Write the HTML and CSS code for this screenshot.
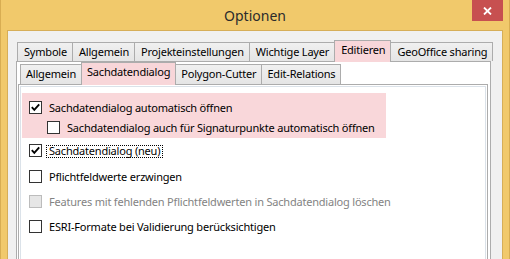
FILE: index.html
```html
<!DOCTYPE html>
<html lang="de">
<head>
  <meta charset="UTF-8">
  <title>Optionen</title>
  <link rel="stylesheet" href="styles.css">
</head>
<body>
  <div class="window">
    <div class="titlebar">
      <span class="title">Optionen</span>
      <button class="close-btn" aria-label="Schließen">
        <svg width="9" height="8" viewBox="0 0 9 8"><path d="M1 0.5 L8 7.5 M8 0.5 L1 7.5" stroke="#fff" stroke-width="1.8"/></svg>
      </button>
    </div>

    <div class="client">
      <div class="tab-control outer">
        <div class="tab-strip">
          <div class="tab">Symbole</div>
          <div class="tab">Allgemein</div>
          <div class="tab">Projekteinstellungen</div>
          <div class="tab">Wichtige Layer</div>
          <div class="tab active">Editieren</div>
          <div class="tab">GeoOffice sharing</div>
        </div>
        <div class="tab-panel">

          <div class="tab-control inner">
            <div class="tab-strip">
              <div class="tab">Allgemein</div>
              <div class="tab active">Sachdatendialog</div>
              <div class="tab">Polygon-Cutter</div>
              <div class="tab">Edit-Relations</div>
            </div>
            <div class="tab-panel">
              <div class="page">

                <!-- highlighted group -->
                <div class="highlight">
                  <label class="check-row">
                    <span class="check checked"><svg width="11" height="11" viewBox="0 0 11 11"><polyline points="1.8,5.2 4.3,7.8 9.2,2.4" fill="none" stroke="#000" stroke-width="1.9"/></svg></span>
                    <span class="check-label">Sachdatendialog automatisch öffnen</span>
                  </label>
                  <label class="check-row sub">
                    <span class="check"></span>
                    <span class="check-label">Sachdatendialog auch für Signaturpunkte automatisch öffnen</span>
                  </label>
                </div>

                <div class="check-list">
                  <label class="check-row focused">
                    <span class="check checked"><svg width="11" height="11" viewBox="0 0 11 11"><polyline points="1.8,5.2 4.3,7.8 9.2,2.4" fill="none" stroke="#000" stroke-width="1.9"/></svg></span>
                    <span class="check-label">Sachdatendialog (neu)</span>
                  </label>
                  <label class="check-row">
                    <span class="check"></span>
                    <span class="check-label">Pflichtfeldwerte erzwingen</span>
                  </label>
                  <label class="check-row disabled">
                    <span class="check"></span>
                    <span class="check-label">Features mit fehlenden Pflichtfeldwerten in Sachdatendialog löschen</span>
                  </label>
                  <label class="check-row">
                    <span class="check"></span>
                    <span class="check-label">ESRI-Formate bei Validierung berücksichtigen</span>
                  </label>
                </div>

              </div>
            </div>
          </div>

        </div>
      </div>
    </div>
  </div>
</body>
</html>
```

FILE: styles.css
```css
/* Reset */
* {
  margin: 0;
  padding: 0;
  box-sizing: border-box;
}

body {
  width: 510px;
  height: 259px;
  overflow: hidden;
  font-family: "Noto Sans", "Open Sans", sans-serif;
  font-size: 11px;
  letter-spacing: -0.2px;
  color: #000;
  background: #f1c96b;
}

/* Window frame */
.window {
  height: 259px;
  display: flex;
  flex-direction: column;
  background: #f1c96b;
  border-left: 1px solid #d8ad52;
  border-right: 1px solid #d8ad52;
  padding: 0 6px;
}

.titlebar {
  height: 30px;
  flex-shrink: 0;
  display: grid;
  grid-template-columns: 1fr auto 1fr;
  align-items: start;
}
.title {
  grid-column: 2;
  font-size: 14px;
  letter-spacing: 0;
  line-height: 31px;
  color: #2b2b2b;
}
.close-btn {
  grid-column: 3;
  justify-self: end;
  width: 31px;
  height: 21px;
  border: none;
  background: #c75050;
  display: flex;
  justify-content: center;
  align-items: center;
}

/* Client area */
.client {
  flex: 1;
  background: #f0f0f0;
  border: 1px solid #d6ae58;
  border-bottom: none;
  padding: 9px 0 0 8px;
  overflow: hidden;
}

/* Tab controls */
.tab-control.outer {
  width: 475px;
}
.tab-strip {
  display: flex;
  align-items: flex-end;
}
.outer > .tab-strip {
  height: 21px;
  padding-left: 1px;
}
.inner > .tab-strip {
  height: 22px;
  padding-left: 2px;
}
.tab {
  border: 1px solid #acacac;
  border-bottom: none;
  background: linear-gradient(#f0f0f0, #e5e5e5);
  line-height: 18px;
  white-space: nowrap;
}
.tab + .tab {
  margin-left: -1px;
}
.outer > .tab-strip > .tab {
  height: 19px;
  padding: 0 5px 0 6px;
}
.inner > .tab-strip > .tab {
  height: 20px;
  padding: 0 5px;
}
.tab.active {
  position: relative;
  z-index: 1;
  background: #f8d6d9;
  margin-bottom: -1px;
}
.outer > .tab-strip > .tab.active {
  height: 22px;
}
.inner > .tab-strip > .tab.active {
  height: 23px;
}

.tab-panel {
  border: 1px solid #acacac;
  background: #fff;
  height: 300px;
}
.outer > .tab-panel {
  padding: 0 2px 0 1px;
}
.inner > .tab-panel {
  padding: 1px;
}

.page {
  height: 100%;
  border: 1px solid #dbe2e9;
  padding: 6px 0 0 1px;
}

/* Highlighted group */
.highlight {
  width: 364px;
  height: 45px;
  background: #f9d7da;
  padding: 8px 0 0 7px;
  display: flex;
  flex-direction: column;
  gap: 7px;
}

.check-list {
  display: flex;
  flex-direction: column;
  gap: 12px;
  padding: 6px 0 0 7px;
}

/* Checkbox rows */
.check-row {
  display: flex;
  align-items: flex-start;
  gap: 4px;
  height: 13px;
}
.check-row.sub {
  margin-left: 18px;
}
.check-row.focused {
  margin-bottom: 1px;
}
.check {
  width: 13px;
  height: 13px;
  flex-shrink: 0;
  border: 1px solid #333;
  background: #fff;
}
.check svg {
  display: block;
}
.check-label {
  margin-top: 1px;
  border: 1px dotted transparent;
  padding: 0 2px 2px;
  line-height: 9px;
  white-space: nowrap;
}
.focused .check-label {
  border-color: #000;
}
.disabled .check {
  border-color: #bcbcbc;
  background: #e6e6e6;
}
.disabled .check-label {
  color: #838383;
}
```
